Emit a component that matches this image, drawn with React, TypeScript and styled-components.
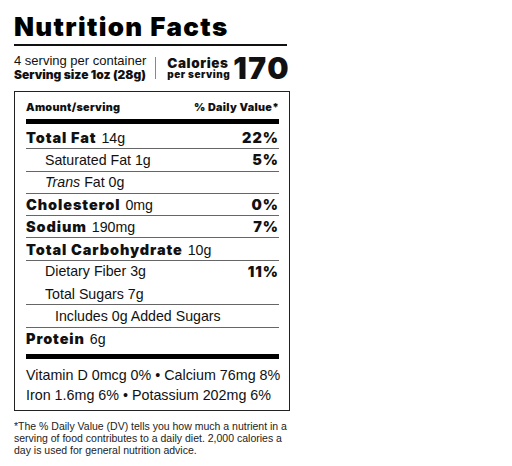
import React from "react";
import styled, { createGlobalStyle } from "styled-components";

const HEAVY = '"Inter", "Liberation Sans", sans-serif';
const REG = '"Liberation Sans", Arial, sans-serif';

const Global = createGlobalStyle`
  html, body { margin: 0; padding: 0; background: #fff; }
  body { font-family: ${REG}; color: #111; }
`;

const Label = styled.div`
  width: 276px;
  padding: 11px 0 0 14px;
`;

const Title = styled.h1`
  margin: 0;
  font-family: ${HEAVY};
  font-weight: 900;
  font-size: 26px;
  line-height: 32px;
  letter-spacing: 1.35px;
  color: #000;
`;

const Rule = styled.div`
  height: 1.5px;
  background: #111;
  margin-top: 1px;
  width: 273px;
`;

const ServingBar = styled.div`
  display: flex;
  align-items: center;
  margin-top: 9px;
  height: 26px;
  white-space: nowrap;
`;

const ServingInfo = styled.div`
  display: flex;
  flex-direction: column;
  gap: 1px;
  width: 144px;
`;

const ServingsLine = styled.div`
  font-family: ${REG};
  font-size: 13px;
  line-height: 12px;
`;

const ServingSize = styled.div`
  font-family: ${HEAVY};
  font-weight: 900;
  font-size: 12px;
  line-height: 13px;
`;

const Divider = styled.div`
  width: 1px;
  height: 22px;
  background: #888;
  margin: 0 11px 0 0;
`;

const CaloriesLabel = styled.div`
  display: flex;
  flex-direction: column;
  font-family: ${HEAVY};
  font-weight: 900;
  margin-right: 3px;
`;

const CalTop = styled.span`
  font-size: 13.5px;
  line-height: 12px;
  letter-spacing: 0.6px;
`;

const CalBottom = styled.span`
  font-size: 10px;
  line-height: 10px;
  letter-spacing: 0.5px;
`;

const CalValue = styled.div`
  font-family: ${HEAVY};
  font-weight: 900;
  font-size: 30px;
  line-height: 26px;
  letter-spacing: 1.5px;
`;

const Box = styled.div`
  margin-top: 10px;
  border: 1.5px solid #222;
  padding: 0 10px 5px 11px;
`;

const Head = styled.div`
  display: flex;
  justify-content: space-between;
  padding-top: 8px;
  height: 27.5px;
  box-sizing: border-box;
  font-family: ${HEAVY};
  font-weight: 900;
  font-size: 10.8px;
  line-height: 15px;
  letter-spacing: 0.3px;
`;

const ThickBar = styled.div<{ $before?: number; $after?: number }>`
  height: 5px;
  background: #000;
  margin-top: ${(p) => p.$before ?? 0}px;
  margin-bottom: ${(p) => p.$after ?? 0}px;
`;

const Row = styled.div<{ $indent: number; $line: boolean }>`
  display: flex;
  justify-content: space-between;
  align-items: center;
  height: 22.3px;
  box-sizing: border-box;
  padding-left: ${(p) => p.$indent}px;
  border-bottom: ${(p) => (p.$line ? "1px solid #666" : "1px solid transparent")};
  font-family: ${REG};
  font-size: 14.2px;
  white-space: nowrap;
`;

const Nutrient = styled.span`
  font-family: ${HEAVY};
  font-weight: 900;
  font-size: 14.5px;
  letter-spacing: 0.9px;
  margin-right: 1px;
`;

const Pct = styled.span`
  font-family: ${HEAVY};
  font-weight: 900;
  font-size: 14.5px;
  letter-spacing: 1px;
`;

const Vitamins = styled.div`
  padding-top: 6.5px;
  font-family: ${REG};
  font-size: 14.3px;
  line-height: 20px;
  white-space: nowrap;
`;

const Footnote = styled.p`
  margin: 9.5px 0 0;
  font-family: ${REG};
  font-size: 10.5px;
  line-height: 11.8px;
  color: #222;
`;

type Item = {
  name?: string;
  pre?: React.ReactNode;
  amount: string;
  pct?: string;
  indent: number;
  line: boolean;
};

const items: Item[] = [
  { name: "Total Fat", amount: "14g", pct: "22%", indent: 0, line: true },
  { pre: "Saturated Fat", amount: "1g", pct: "5%", indent: 19, line: true },
  { pre: <><i>Trans</i> Fat</>, amount: "0g", indent: 19, line: true },
  { name: "Cholesterol", amount: "0mg", pct: "0%", indent: 0, line: true },
  { name: "Sodium", amount: "190mg", pct: "7%", indent: 0, line: true },
  { name: "Total Carbohydrate", amount: "10g", indent: 0, line: true },
  { pre: "Dietary Fiber ", amount: "3g", pct: "11%", indent: 19, line: false },
  { pre: "Total Sugars ", amount: "7g", indent: 19, line: true },
  { pre: "Includes 0g Added Sugars", amount: "", indent: 29, line: true },
  { name: "Protein", amount: "6g", indent: 0, line: false },
];

export default function App() {
  return (
    <>
      <Global />
      <Label>
        <Title>Nutrition Facts</Title>
        <Rule />
        <ServingBar>
          <ServingInfo>
            <ServingsLine>4 serving per container</ServingsLine>
            <ServingSize>Serving size 1oz (28g)</ServingSize>
          </ServingInfo>
          <Divider />
          <CaloriesLabel>
            <CalTop>Calories</CalTop>
            <CalBottom>per serving</CalBottom>
          </CaloriesLabel>
          <CalValue>170</CalValue>
        </ServingBar>
        <Box>
          <Head>
            <span>Amount/serving</span>
            <span>% Daily Value*</span>
          </Head>
          <ThickBar $after={3} />
          {items.map((it, i) => (
            <Row key={i} $indent={it.indent} $line={it.line}>
              <span>
                {it.name && <Nutrient>{it.name}</Nutrient>}
                {it.pre}
                {it.amount && " " + it.amount}
              </span>
              {it.pct && <Pct>{it.pct}</Pct>}
            </Row>
          ))}
          <ThickBar $before={4} />
          <Vitamins>
            <div>Vitamin D 0mcg 0% • Calcium 76mg 8%</div>
            <div>Iron 1.6mg 6% • Potassium 202mg 6%</div>
          </Vitamins>
        </Box>
        <Footnote>
          *The % Daily Value (DV) tells you how much a nutrient in a serving of food
          contributes to a daily diet. 2,000 calories a day is used for general
          nutrition advice.
        </Footnote>
      </Label>
    </>
  );
}
